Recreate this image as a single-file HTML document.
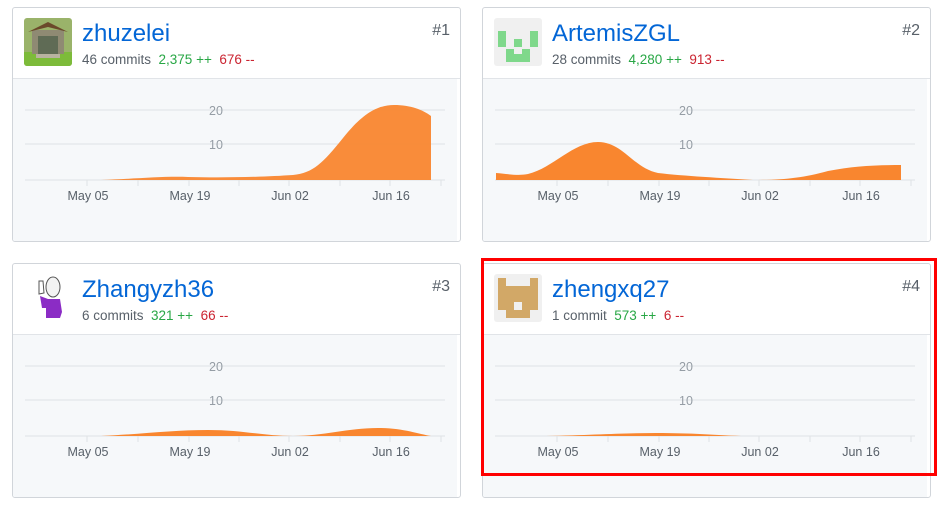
<!DOCTYPE html>
<html><head><meta charset="utf-8"><style>
body{margin:0;width:943px;height:507px;background:#fff;font-family:"Liberation Sans",sans-serif;position:relative;overflow:hidden}
.card{position:absolute;width:447px;height:233px;border:1px solid #d1d5da;border-radius:3px;background:#fff;overflow:hidden}
.hd{position:absolute;left:0;top:0;width:447px;height:70px;border-bottom:1px solid #e1e4e8}
.av{position:absolute;left:11px;top:10px;width:48px;height:48px;border-radius:3px;overflow:hidden}
.nm{position:absolute;left:69px;top:12px;font-size:24px;color:#0366d6}
.st{position:absolute;left:69px;top:44px;font-size:13.5px;color:#586069;white-space:nowrap}
.g{color:#28a745}.r{color:#cb2431}
.rk{position:absolute;right:10px;top:14px;font-size:16px;color:#586069}
.ch{position:absolute;left:0;top:71px;width:444px;height:162px;background:#f6f8fa}
svg{position:absolute;left:0;top:0}
svg text{font-family:"Liberation Sans",sans-serif;font-size:12.5px;fill:#586069}
</style></head><body>

<svg width="0" height="0"><defs>
<g id="axes">
<line x1="12" y1="102" x2="432" y2="102" stroke="#dfe2e5"/>
<line x1="12" y1="136" x2="432" y2="136" stroke="#dfe2e5"/>
<line x1="12" y1="172" x2="432" y2="172" stroke="#dfe2e5"/>
<text x="203" y="107" text-anchor="middle" style="fill:#959da5">20</text>
<text x="203" y="141" text-anchor="middle" style="fill:#959da5">10</text>
<g stroke="#dfe2e5"><line x1="74" y1="172" x2="74" y2="178"/><line x1="125" y1="172" x2="125" y2="178"/><line x1="176" y1="172" x2="176" y2="178"/><line x1="226" y1="172" x2="226" y2="178"/><line x1="276" y1="172" x2="276" y2="178"/><line x1="327" y1="172" x2="327" y2="178"/><line x1="377" y1="172" x2="377" y2="178"/><line x1="428" y1="172" x2="428" y2="178"/></g>
<text x="75" y="192" text-anchor="middle">May 05</text>
<text x="177" y="192" text-anchor="middle">May 19</text>
<text x="277" y="192" text-anchor="middle">Jun 02</text>
<text x="378" y="192" text-anchor="middle">Jun 16</text>
</g></defs></svg>

<div class="card" style="left:12px;top:7px">
<div class="ch"></div>
<svg width="449" height="235"><use href="#axes"/>
<path d="M88,172 C120,171 150,168 175,169 C210,170 250,169 280,167 C300,165 310,155 330,130 C350,105 365,97 381,97 C398,97 410,102 418,108 L418,172 Z" fill="#f9862f" opacity=".95"/></svg>
<div class="hd"><div class="av"><svg width="48" height="48"><rect width="48" height="48" fill="#9ab36a"/><rect y="34" width="48" height="14" fill="#7dbb3a"/><rect x="8" y="12" width="32" height="24" fill="#8f8a73"/><path d="M4,14 L24,4 L44,14 L36,12 L24,9 L12,12Z" fill="#6b4a2a"/><rect x="14" y="18" width="20" height="18" fill="#5f6b55"/><rect x="12" y="36" width="24" height="4" fill="#b8b3a0"/></svg></div>
<div class="nm">zhuzelei</div><div class="st">46 commits&nbsp; <span class="g">2,375 ++</span>&nbsp; <span class="r">676 --</span></div><div class="rk">#1</div></div>
</div>

<div class="card" style="left:482px;top:7px">
<div class="ch"></div>
<svg width="449" height="235"><use href="#axes"/>
<path d="M13,172 L13,165 C25,166 35,168 45,166 C70,160 90,134 115,134 C140,134 150,160 175,165 C200,168 240,170 270,172 C300,172 320,170 345,163 C370,158 390,157 418,157 L418,172 Z" fill="#f9862f"/></svg>
<div class="hd"><div class="av" style="background:#f0f0f0"><svg width="48" height="48" style="fill:#7fd88b"><rect x="4" y="13" width="8" height="16"/><rect x="36" y="13" width="8" height="16"/><rect x="20" y="21" width="8" height="8"/><rect x="12" y="36" width="24" height="8"/><rect x="12" y="31" width="8" height="6"/><rect x="28" y="31" width="8" height="6"/></svg></div>
<div class="nm">ArtemisZGL</div><div class="st">28 commits&nbsp; <span class="g">4,280 ++</span>&nbsp; <span class="r">913 --</span></div><div class="rk">#2</div></div>
</div>

<div class="card" style="left:12px;top:263px">
<div class="ch"></div>
<svg width="449" height="235"><use href="#axes"/>
<path d="M88,172 C130,170 160,166 195,166 C230,166 250,172 280,172 C310,172 335,164 365,164 C390,164 405,170 418,172 Z" fill="#f9862f"/></svg>
<div class="hd"><div class="av"><svg width="48" height="48"><rect width="48" height="48" fill="#fff"/><ellipse cx="29" cy="13" rx="7" ry="10" fill="#f3f3f3" stroke="#555"/><path d="M15,20 L15,7 L19,7 L20,19Z" fill="#fff" stroke="#555"/><path d="M16,22 L24,25 L36,25 L38,38 L36,44 L22,44 L22,34 L18,34Z" fill="#8b2cc5"/></svg></div>
<div class="nm">Zhangyzh36</div><div class="st">6 commits&nbsp; <span class="g">321 ++</span>&nbsp; <span class="r">66 --</span></div><div class="rk">#3</div></div>
</div>

<div class="card" style="left:482px;top:263px">
<div class="ch"></div>
<svg width="449" height="235"><use href="#axes"/>
<path d="M63,172 C110,171 140,169 173,169 C210,169 230,171 258,172 Z" fill="#f9862f"/></svg>
<div class="hd"><div class="av" style="background:#f0f0f0"><svg width="48" height="48" fill="#d2a867"><path d="M4,4 H12 V12 H36 V4 H44 V36 H36 V44 H12 V36 H4Z"/><rect x="20" y="28" width="8" height="8" fill="#f0f0f0"/></svg></div>
<div class="nm">zhengxq27</div><div class="st">1 commit&nbsp; <span class="g">573 ++</span>&nbsp; <span class="r">6 --</span></div><div class="rk">#4</div></div>
</div>

<div style="position:absolute;left:481px;top:258px;width:450px;height:212px;border:3px solid #f00"></div>
</body></html>
